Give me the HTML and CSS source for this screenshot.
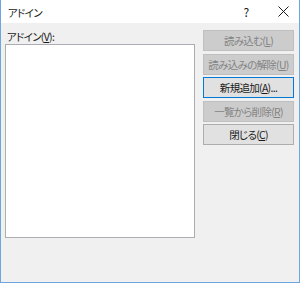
FILE: index.html
```html
<!DOCTYPE html>
<html lang="ja">

<head>
    <meta charset="UTF-8">
    <meta name="viewport" content="width=device-width, initial-scale=1.0">
    <title>アドイン</title>
    <link rel="stylesheet" href="styles.css">
</head>

<body>
    <div class="window">
        <div class="titlebar">
            <span class="title">アドイン</span>
            <span class="help">?</span>
            <span class="close">
                <svg width="11" height="11" viewBox="0 0 11 11">
                    <path d="M0.5 0.5 L10.5 10.5 M10.5 0.5 L0.5 10.5" stroke="#1a1a1a" stroke-width="1" fill="none"/>
                </svg>
            </span>
        </div>
        <div class="content">
            <div class="list-column">
                <div class="label">アドイン(<u>V</u>):</div>
                <div class="listbox"></div>
            </div>
            <div class="buttons">
                <div class="btn disabled">読み込む(<u>L</u>)</div>
                <div class="btn disabled">読み込みの解除(<u>U</u>)</div>
                <div class="btn default">新規追加(<u>A</u>)...</div>
                <div class="btn disabled">一覧から削除(<u>R</u>)</div>
                <div class="btn">閉じる(<u>C</u>)</div>
            </div>
        </div>
    </div>
</body>

</html>
```

FILE: styles.css
```css
body {
    margin: 0;
    padding: 0;
    font-family: "Noto Sans CJK JP", "Noto Sans", sans-serif;
    font-size: 10.5px;
    font-feature-settings: "palt";
    letter-spacing: -0.7px;
    color: #1a1a1a;
}

.window {
    width: 300px;
    height: 283px;
    box-sizing: border-box;
    border: 1px solid #6ca6e0;
    border-top: none;
    background-color: #f0f0f0;
    display: flex;
    flex-direction: column;
}

.titlebar {
    height: 23px;
    background-color: #fff;
    display: flex;
    align-items: center;
    padding-left: 7px;
}

.title {
    flex: 1;
    line-height: 15px;
    padding-top: 1px;
}

.help {
    width: 20px;
    text-align: center;
    margin-right: 22px;
    line-height: 15px;
    font-size: 12px;
}

.close {
    width: 15px;
    display: flex;
    align-items: center;
    margin-right: 6px;
}

.content {
    display: flex;
    padding: 6px 0 0 4px;
}

.list-column {
    display: flex;
    flex-direction: column;
}

.label {
    line-height: 15px;
    padding-left: 2px;
}

.listbox {
    width: 190px;
    height: 194px;
    box-sizing: border-box;
    background-color: #fff;
    border: 1px solid #abadb3;
}

.buttons {
    display: flex;
    flex-direction: column;
    gap: 2.5px;
    margin-left: 8px;
    margin-top: 1px;
}

.btn {
    width: 91px;
    height: 21px;
    box-sizing: border-box;
    border: 1px solid #adadad;
    background-color: #e1e1e1;
    display: flex;
    justify-content: center;
    align-items: center;
    line-height: 15px;
    white-space: nowrap;
}

.btn.disabled {
    background-color: #cccccc;
    border-color: #bfbfbf;
    color: #838383;
}

.btn.default {
    border-color: #0078d7;
}

.btn u {
    text-underline-offset: 1px;
}
```
